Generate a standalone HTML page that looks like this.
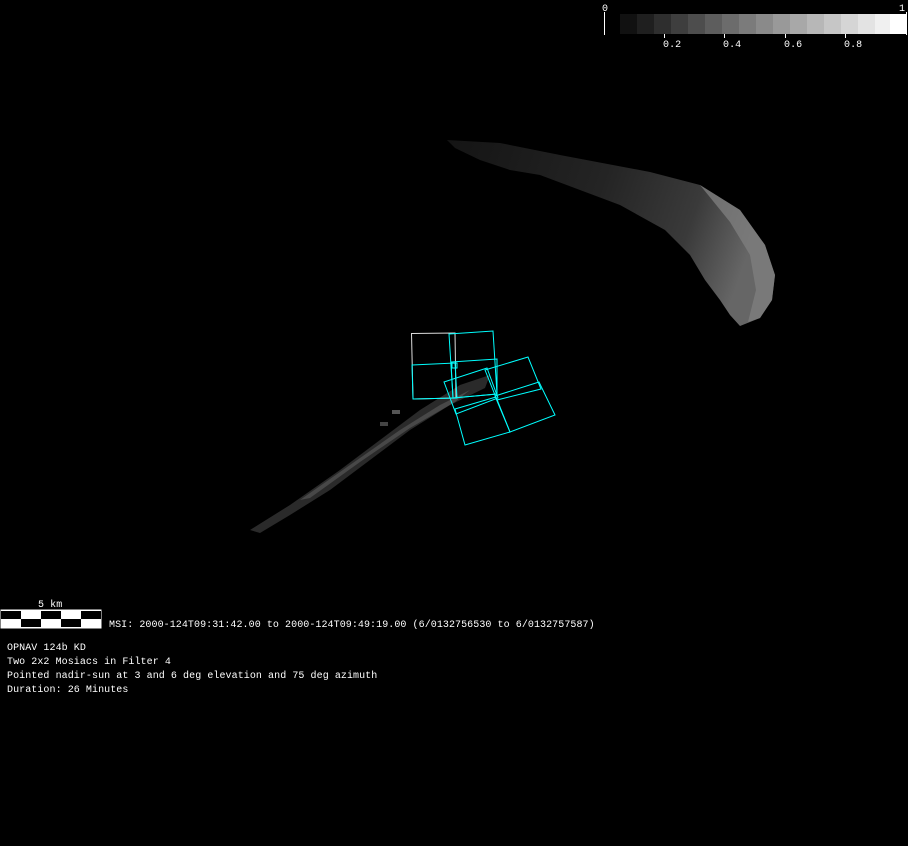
<!DOCTYPE html>
<html><head><style>
html,body{margin:0;padding:0;background:#000;}
body{width:908px;height:846px;overflow:hidden;position:relative;}
svg{position:absolute;left:0;top:0;}
text{font-family:"Liberation Mono",monospace;font-size:10px;fill:#fff;letter-spacing:0.07px;}
</style></head><body>
<svg width="908" height="846" viewBox="0 0 908 846">
<defs>
<linearGradient id="cg" x1="0" y1="0" x2="1" y2="0.2">
<stop offset="0" stop-color="#141414"/>
<stop offset="0.5" stop-color="#242424"/>
<stop offset="0.8" stop-color="#3a3a3a"/>
<stop offset="1" stop-color="#666"/>
</linearGradient>
</defs>
<g>
<rect x="620" y="14" width="18" height="20" fill="#111"/>
<rect x="637" y="14" width="18" height="20" fill="#1f1f1f"/>
<rect x="654" y="14" width="18" height="20" fill="#2e2e2e"/>
<rect x="671" y="14" width="18" height="20" fill="#3e3e3e"/>
<rect x="688" y="14" width="18" height="20" fill="#4d4d4d"/>
<rect x="705" y="14" width="18" height="20" fill="#5d5d5d"/>
<rect x="722" y="14" width="18" height="20" fill="#6c6c6c"/>
<rect x="739" y="14" width="18" height="20" fill="#7b7b7b"/>
<rect x="756" y="14" width="18" height="20" fill="#8a8a8a"/>
<rect x="773" y="14" width="18" height="20" fill="#999"/>
<rect x="790" y="14" width="18" height="20" fill="#a8a8a8"/>
<rect x="807" y="14" width="18" height="20" fill="#b7b7b7"/>
<rect x="824" y="14" width="18" height="20" fill="#c6c6c6"/>
<rect x="841" y="14" width="18" height="20" fill="#d5d5d5"/>
<rect x="858" y="14" width="18" height="20" fill="#e3e3e3"/>
<rect x="875" y="14" width="16" height="20" fill="#f0f0f0"/>
<rect x="890" y="14" width="17" height="20" fill="#fff"/>
</g>
<g stroke="#fff" stroke-width="1">
<line x1="604.5" y1="12" x2="604.5" y2="35"/>
<line x1="906.5" y1="12" x2="906.5" y2="35"/>
<line x1="664.5" y1="34" x2="664.5" y2="38"/>
<line x1="724.5" y1="34" x2="724.5" y2="38"/>
<line x1="785.5" y1="34" x2="785.5" y2="38"/>
<line x1="845.5" y1="34" x2="845.5" y2="38"/>
</g>
<text x="602" y="11">0</text>
<text x="899" y="11">1</text>
<text x="663" y="47">0.2</text>
<text x="723" y="47">0.4</text>
<text x="784" y="47">0.6</text>
<text x="844" y="47">0.8</text>
<path d="M447,140 L500,143 L560,155 L650,172 L700,185 L740,210 L765,245 L775,275 L772,300 L760,318 L740,326 L730,315 L720,300 L705,280 L690,255 L665,230 L620,205 L580,190 L540,175 L510,170 L480,160 L455,148 Z" fill="url(#cg)"/>
<path d="M700,185 L740,210 L765,245 L775,275 L772,300 L760,318 L748,322 L756,290 L750,255 L730,222 Z" fill="#808080" opacity="0.75"/>
<path d="M250,530 L290,505 L340,470 L380,440 L420,410 L460,385 L490,375 L485,388 L450,405 L410,430 L370,460 L330,490 L290,515 L260,533 Z" fill="#2a2a2a"/>
<path d="M300,500 L350,465 L400,430 L440,405 L470,390 L455,402 L410,428 L360,462 L310,498 Z" fill="#484848"/>
<rect x="380" y="422" width="8" height="4" fill="#444"/>
<rect x="392" y="410" width="8" height="4" fill="#555"/>
<g fill="none" stroke="#0ff" stroke-width="1">
<polygon points="411.5,333.5 455,333 456,398 413,399" stroke="#ddd"/>
<polygon points="449,334 493,331 497,394 453,398"/>
<polygon points="412,365 455,363 457,398 413,399"/>
<polygon points="451,362 497,359 497,394 453,398"/>
<rect x="452" y="363" width="5" height="5"/>
<polygon points="444,382 487,368 498,398 456,414"/>
<polygon points="485,370 528,357 541,389 497,400"/>
<polygon points="455,409 496,397 510,432 465,445"/>
<polygon points="495,396 539,382 555,415 510,432"/>
</g>
<rect x="0.5" y="609.5" width="101" height="19" fill="#fff"/>
<rect x="1" y="611" width="20" height="8" fill="#000"/>
<rect x="41" y="611" width="20" height="8" fill="#000"/>
<rect x="81" y="611" width="20" height="8" fill="#000"/>
<rect x="21" y="619" width="20" height="8" fill="#000"/>
<rect x="61" y="619" width="20" height="8" fill="#000"/>
<text x="38" y="607">5 km</text>
<text x="109" y="627">MSI:  2000-124T09:31:42.00 to 2000-124T09:49:19.00 (6/0132756530 to 6/0132757587)</text>
<text x="7" y="650">OPNAV 124b KD</text>
<text x="7" y="664">Two 2x2 Mosiacs in Filter 4</text>
<text x="7" y="678">Pointed nadir-sun at 3 and 6 deg elevation and 75 deg azimuth</text>
<text x="7" y="692">Duration: 26 Minutes</text>
</svg>
</body></html>
